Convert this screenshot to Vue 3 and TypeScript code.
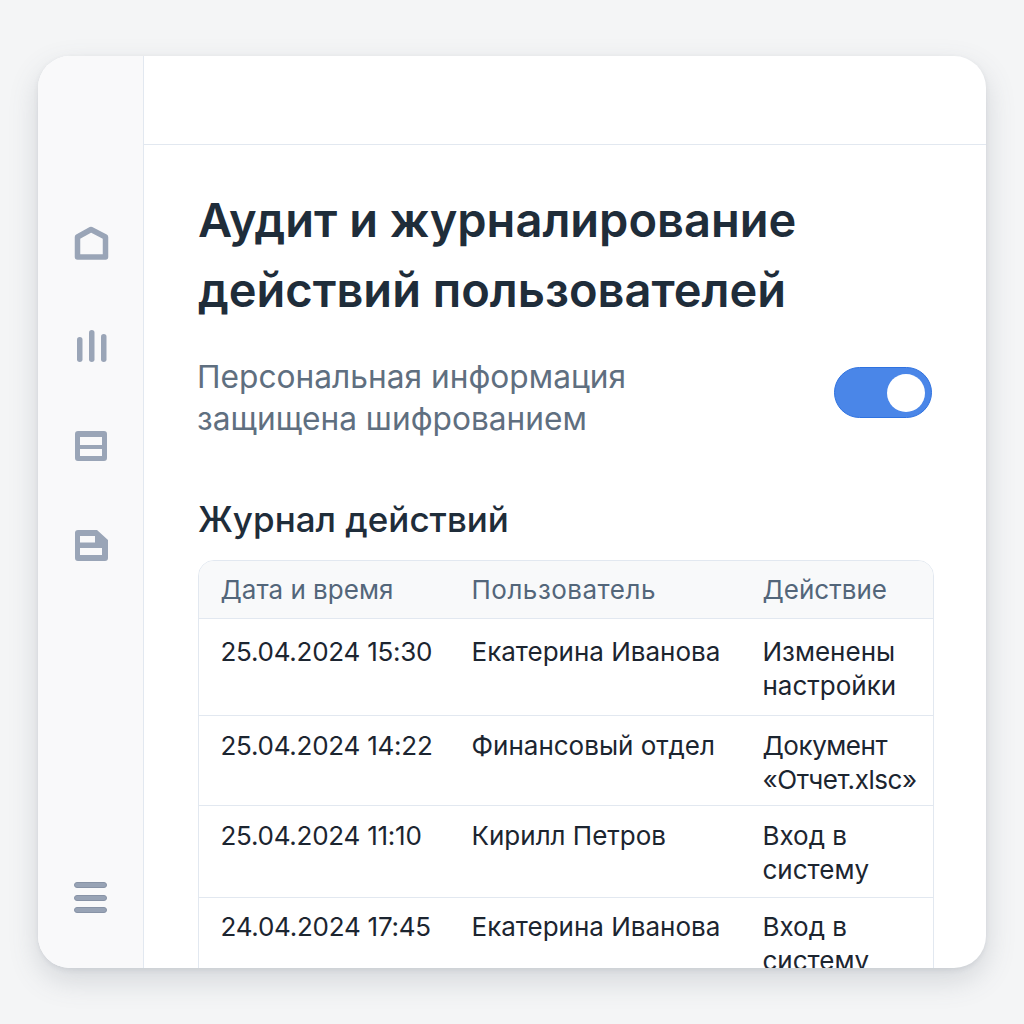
<script setup lang="ts">
interface Row { date: string; user: string; action: string[] }
const rows: Row[] = [
  { date: '25.04.2024 15:30', user: 'Екатерина Иванова', action: ['Изменены', 'настройки'] },
  { date: '25.04.2024 14:22', user: 'Финансовый отдел', action: ['Документ', '«Отчет.xlsc»'] },
  { date: '25.04.2024 11:10', user: 'Кирилл Петров', action: ['Вход в', 'систему'] },
  { date: '24.04.2024 17:45', user: 'Екатерина Иванова', action: ['Вход в', 'систему'] },
]
</script>

<template>
  <div class="page">
    <div class="card">
      <aside class="side">
        <div class="nav">
          <svg class="ico" width="36" height="34" viewBox="0 0 36 34">
            <path d="M18 3.500 L32.500 11 V31 H4.500 V11 Z" fill="none" stroke="#9aa5b7" stroke-width="5.500" stroke-linejoin="round" />
          </svg>
          <svg class="ico" width="36" height="34" viewBox="0 0 36 34">
            <rect x="4" y="9" width="5.500" height="25" rx="2.750" fill="#9aa5b7" />
            <rect x="16" y="2" width="5.500" height="32" rx="2.750" fill="#9aa5b7" />
            <rect x="28" y="6" width="5.500" height="28" rx="2.750" fill="#9aa5b7" />
          </svg>
          <svg class="ico" width="36" height="32" viewBox="0 -1 36 32">
            <path fill-rule="evenodd" fill="#9aa5b7" d="M5 0 H31 a3 3 0 0 1 3 3 V27 a3 3 0 0 1 -3 3 H5 a3 3 0 0 1 -3 -3 V3 a3 3 0 0 1 3 -3 Z M7 6 V14 H29 V6 Z M7 18 V25 H29 V18 Z" />
          </svg>
          <svg class="ico" width="36" height="32" viewBox="0 0 36 32">
            <path fill-rule="evenodd" fill="#9aa5b7" d="M5 0 H24 L35 10 V28 a3 3 0 0 1 -3 3 H5 a3 3 0 0 1 -3 -3 V3 a3 3 0 0 1 3 -3 Z M7 6 V12.500 H22 V6 Z M7 18 V25 H29 V18 Z" />
          </svg>
        </div>
        <div class="burger"><span></span><span></span><span></span></div>
      </aside>
      <main class="main">
        <div class="topbar"></div>
        <div class="content">
          <h1 class="title">Аудит и журналирование<br />действий пользователей</h1>
          <div class="notice">
            <p class="notice-text">Персональная информация<br />защищена шифрованием</p>
            <div class="toggle"><span class="knob"></span></div>
          </div>
          <h2 class="subtitle">Журнал действий</h2>
          <div class="table">
            <div class="row head">
              <div>Дата и время</div>
              <div class="head-user">Пользователь</div>
              <div>Действие</div>
            </div>
            <div v-for="r in rows" :key="r.date" class="row body">
              <div class="date">{{ r.date }}</div>
              <div>{{ r.user }}</div>
              <div class="act">{{ r.action[0] }}<br />{{ r.action[1] }}</div>
            </div>
          </div>
        </div>
      </main>
    </div>
  </div>
</template>

<style scoped>
.page {
  box-sizing: border-box;
  width: 1024px;
  height: 1024px;
  padding: 56px 38px;
  background: #f4f5f6;
  font-family: Inter, "Noto Sans", sans-serif;
}
.card {
  display: flex;
  height: 912px;
  border-radius: 32px;
  overflow: hidden;
  background: #fff;
  box-shadow: 0 12px 30px rgba(80, 88, 105, 0.2), 0 2px 5px rgba(80, 88, 105, 0.1);
}
.side {
  box-sizing: border-box;
  flex: 0 0 106px;
  display: flex;
  flex-direction: column;
  align-items: center;
  justify-content: space-between;
  padding: 170px 0 55px;
  background: #f9f9fa;
  border-right: 1px solid #e2e8f0;
}
.nav {
  display: flex;
  flex-direction: column;
  align-items: center;
  gap: 68px;
}
.ico { display: block; }
.burger {
  display: flex;
  flex-direction: column;
  gap: 6.500px;
}
.burger span {
  display: block;
  width: 33px;
  height: 6px;
  border-radius: 3px;
  background: #98a3b5;
  border: 0.5px solid #8893a6;
  box-sizing: border-box;
}
.main {
  flex: 1;
  min-width: 0;
  display: flex;
  flex-direction: column;
  overflow: hidden;
}
.topbar {
  flex: 0 0 89px;
  box-sizing: border-box;
  border-bottom: 1px solid #e2e8f0;
}
.content {
  padding: 40px 52px 0 54px;
}
.title {
  margin: 0;
  font-size: 47px;
  line-height: 70px;
  font-weight: 600;
  color: #1f2d3a;
}
.notice {
  display: flex;
  align-items: flex-start;
  justify-content: space-between;
  margin-top: 31px;
}
.notice-text {
  margin: 0 0 0 -1px;
  font-size: 31.700px;
  line-height: 42px;
  color: #5f6f80;
}
.toggle {
  box-sizing: border-box;
  width: 98px;
  height: 51px;
  margin-right: 2px;
  margin-top: 11px;
  padding: 5.500px 6px;
  display: flex;
  justify-content: flex-end;
  border-radius: 26px;
  background: #4a86e8;
  border: 1px solid #2f72e0;
}
.knob {
  width: 38px;
  height: 38px;
  border-radius: 50%;
  background: #fff;
}
.subtitle {
  margin: 55px 0 0;
  font-size: 35px;
  line-height: 48px;
  font-weight: 500;
  color: #1f2d3a;
}
.table {
  margin-top: 17px;
  border: 1px solid #e2e8f0;
  border-radius: 16px 16px 0 0;
  overflow: hidden;
}
.row {
  display: grid;
  grid-template-columns: 251px 291px 1fr;
  padding-left: 21.500px;
  font-size: 26px;
  line-height: 34px;
}
.date { letter-spacing: -0.25px; }
.head {
  height: 58px;
  box-sizing: border-box;
  align-items: center;
  background: #f8f9fa;
  color: #53667a;
  border-bottom: 1px solid #e2e8f0;
}
.head-user { letter-spacing: 0.5px; }
.body {
  color: #1c2530;
  font-weight: 380;
  border-bottom: 1px solid #e2e8f0;
  padding-top: 13px;
  padding-bottom: 9px;
}
.body:nth-child(2) { padding-top: 16px; padding-bottom: 12px; }
.body:nth-child(3) { padding-bottom: 8px; }
.body:nth-child(3) .act { letter-spacing: -0.45px; }
.body:nth-child(4) { padding-bottom: 10px; }
.body:nth-child(5) { padding-top: 12px; }
</style>
